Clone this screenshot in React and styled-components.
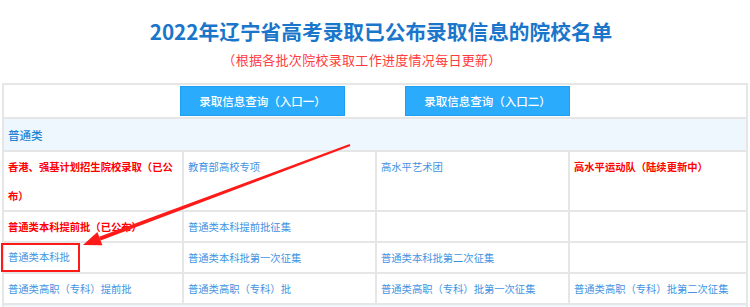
import React from "react";
import styled, { createGlobalStyle } from "styled-components";

const GlobalStyle = createGlobalStyle`
  body {
    margin: 0;
    background: #fff;
    font-family: "Noto Sans CJK SC", "Noto Sans", sans-serif;
  }
`;

const Page = styled.div`
  position: relative;
  width: 750px;
  height: 307px;
  overflow: hidden;
`;

const Title = styled.h1`
  margin: 0;
  padding: 18px 0 0 12px;
  font-size: 20.7px;
  line-height: 26px;
  font-weight: 700;
  color: #1a76cb;
  text-align: center;
`;

const SubTitle = styled.p`
  margin: 6px 0 0;
  padding-right: 26px;
  font-size: 13px;
  line-height: 20px;
  color: #ff3b3b;
  text-align: center;
  letter-spacing: 0.3px;
`;

const Table = styled.div`
  margin: 13px 2px 0;
  display: grid;
  grid-template-columns: 178px 191px 191px 176px;
  gap: 2px;
  padding: 2px;
  background: #e6e6e6;
`;

const ButtonRow = styled.div`
  grid-column: 1 / -1;
  display: flex;
  justify-content: center;
  gap: 60px;
  padding: 1px 0;
  background: #fff;
`;

const QueryButton = styled.a`
  width: 163px;
  height: 28px;
  display: flex;
  align-items: center;
  justify-content: center;
  background: #2aabfb;
  border: 1px solid #1f9ff2;
  color: #fff;
  font-size: 11.5px;
  font-weight: 500;
  text-decoration: none;
`;

const SectionHead = styled.div`
  grid-column: 1 / -1;
  height: 31px;
  display: flex;
  align-items: center;
  padding: 0 4px;
  background: #eef6fe;
  color: #1b86d6;
  font-size: 11.5px;
  font-weight: 500;
`;

const Cell = styled.div`
  display: flex;
  align-items: stretch;
  min-height: 29px;
  padding: 0 4px;
  background: #fff;
  font-size: 10.3px;
  line-height: 29px;
  color: ${(p) => (p.$hot ? "#ff0000" : "#4193e2")};
  font-weight: ${(p) => (p.$hot ? 700 : 400)};
`;

const Mark = styled.span`
  display: flex;
  align-items: center;
  margin-left: -7px;
  padding: 0 8px 0 5px;
  border: 2px solid #ff1a1a;
  line-height: 1;
`;

const Arrow = styled.svg`
  position: absolute;
  top: 0;
  left: 0;
  pointer-events: none;
`;

const rows = [
  [
    { text: "香港、强基计划招生院校录取（已公布）", hot: true },
    { text: "教育部高校专项" },
    { text: "高水平艺术团" },
    { text: "高水平运动队（陆续更新中）", hot: true },
  ],
  [
    { text: "普通类本科提前批（已公布）", hot: true },
    { text: "普通类本科提前批征集" },
    { text: "" },
    { text: "" },
  ],
  [
    { text: "普通类本科批", mark: true },
    { text: "普通类本科批第一次征集" },
    { text: "普通类本科批第二次征集" },
    { text: "" },
  ],
  [
    { text: "普通类高职（专科）提前批" },
    { text: "普通类高职（专科）批" },
    { text: "普通类高职（专科）批第一次征集" },
    { text: "普通类高职（专科）批第二次征集" },
  ],
];

export default function App() {
  return (
    <Page>
      <GlobalStyle />
      <Title>2022年辽宁省高考录取已公布录取信息的院校名单</Title>
      <SubTitle>（根据各批次院校录取工作进度情况每日更新）</SubTitle>
      <Table>
        <ButtonRow>
          <QueryButton href="#">录取信息查询（入口一）</QueryButton>
          <QueryButton href="#">录取信息查询（入口二）</QueryButton>
        </ButtonRow>
        <SectionHead>普通类</SectionHead>
        {rows.map((row, i) =>
          row.map((c, j) => (
            <Cell key={`${i}-${j}`} $hot={c.hot}>
              {c.mark ? <Mark>{c.text}</Mark> : <span>{c.text}</span>}
            </Cell>
          ))
        )}
        <SectionHead />
      </Table>
      <Arrow width="750" height="307" viewBox="0 0 750 307">
        <polygon
          points="350.4,145.9 349.6,144.1 99.2,236.8 100.6,240.6"
          fill="#ff1a1a"
        />
        <polygon points="83,245 102.4,245.3 97.4,232.1" fill="#ff1a1a" />
      </Arrow>
    </Page>
  );
}
